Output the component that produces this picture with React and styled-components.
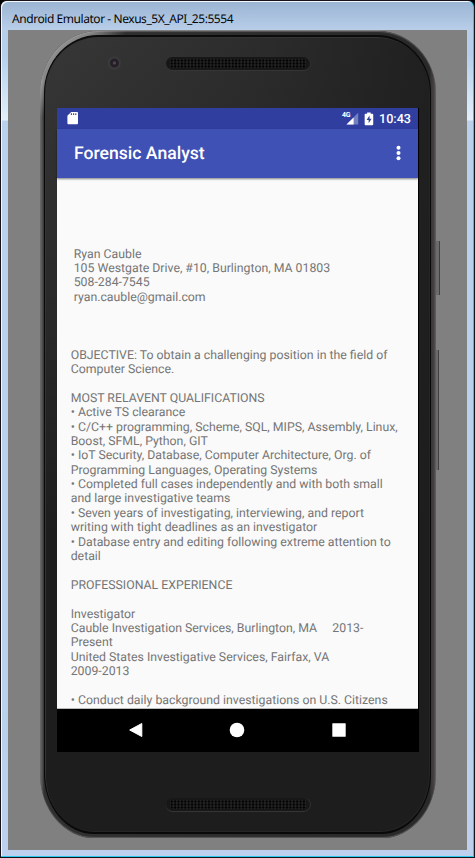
import React from 'react';
import styled, { createGlobalStyle } from 'styled-components';

const GlobalStyle = createGlobalStyle`
  * { box-sizing: border-box; }
  html, body { margin: 0; background: #000; overflow: hidden; }
`;

const Window = styled.div`
  width: 475px;
  height: 858px;
  display: flex;
  flex-direction: column;
  padding: 1px 1px 1px;
  border-radius: 7px 7px 0 0;
  background: #17131a;
  font-family: Roboto, sans-serif;
  text-rendering: geometricPrecision;
`;

const WindowFrame = styled.div`
  flex: 1;
  display: flex;
  flex-direction: column;
  padding: 1px 6px 6px 7px;
  border: 1px solid #28c8ea;
  border-width: 0 1px 1px 0;
  border-radius: 6px 6px 0 0;
  box-shadow: inset 1px 1px 0 #f4f8fc;
  background: linear-gradient(#9ab4d2 0, #b7cde8 28px, #b5d0ec 55px, #dcebf9 110px, #e3effa 119px, #b9d1ea 120px, #b9d1ea 700px, #bdd0ed 100%);
`;

const TitleBar = styled.header`
  height: 28px;
  padding: 8px 0 0 4px;
  font: 12px/18px 'Noto Sans', 'Open Sans', sans-serif;
  letter-spacing: -0.44px;
  white-space: nowrap;
  color: #050505;
`;

const Desktop = styled.main`
  width: 459px;
  height: 820px;
  padding: 1px 0 0 32px;
  background: #808080;
  overflow: hidden;
`;

const Phone = styled.div`
  position: relative;
  width: 396px;
  height: 807px;
  padding: 4px 5px 4px 4px;
  border-radius: 58px 58px 54px 54px / 62px 62px 64px 64px;
  background: linear-gradient(90deg, #6c6c6c 0, #555 2px, #303030 4px, #292929 390px, #393536 391px, #464243 394px, #666 396px);
  box-shadow: inset 0 1px 1px #5b5b5b, inset 0 -1px 1px #5a5a5a;

  &::before {
    content: '';
    position: absolute;
    inset: 0;
    border-radius: inherit;
    background: linear-gradient(135deg, rgba(205, 205, 205, 0.75) 0, rgba(200, 200, 200, 0.55) 38px, transparent 62px);
  }
`;

const Face = styled.div`
  position: relative;
  height: 100%;
  display: flex;
  flex-direction: column;
  padding: 0 12px 0 12px;
  border: 1px solid #090909;
  border-top: 2px solid #0b0b0b;
  border-bottom-width: 2px;
  border-radius: 54px 54px 50px 50px / 58px 58px 60px 60px;
  background: linear-gradient(180deg, transparent 0, #1d1d1e 500px),
    linear-gradient(90deg, #373738, #2c2c2c 55%, #202020);
  box-shadow: inset 1px 1px 0 #343434, inset -1px -1px 0 #252525;
`;

const SideButton = styled.i`
  position: absolute;
  left: 396px;
  top: ${(p) => p.$top}px;
  width: ${(p) => p.$width}px;
  height: ${(p) => p.$height}px;
  border-left: ${(p) => p.$width - 1}px solid #6b6b6b;
  background: #423f40;
`;

const Forehead = styled.div`
  height: 71px;
  display: grid;
  grid-template-columns: 109px 144px;
  align-items: start;
  flex: none;
`;

const Camera = styled.span`
  width: 14px;
  height: 14px;
  margin: 19px 0 0 50px;
  border-radius: 50%;
  background: radial-gradient(circle at 53% 50%, #5a424b 0 1px, #24202a 2px 4px, #3a3a3a 5px 6px, #343434 7px);
`;

const Speaker = styled.span`
  display: block;
  width: 144px;
  height: 13px;
  margin-top: ${(p) => p.$top}px;
  padding: 2px 4px;
  border-radius: 7px;
  background: #171717;
  box-shadow: 0 1px 0 #353535, 1px 0 0 #303030;

  &::after {
    content: '';
    display: block;
    height: 9px;
    background: radial-gradient(circle at 50% 50%, #020202 0 0.8px, #222 1.5px) 0 0 / 3.4px 3px;
  }
`;

const Chin = styled.div`
  display: flex;
  padding-left: 109px;
`;

const Screen = styled.section`
  width: 362px;
  height: 644px;
  flex: none;
  display: flex;
  flex-direction: column;
  padding-right: 1px;
  background: #000;
`;

const StatusBar = styled.div`
  height: 21px;
  display: flex;
  align-items: center;
  justify-content: space-between;
  padding: 0 7px 0 10px;
  background: #303f9f;
  color: #fff;
`;

const SdIcon = styled.svg`
  margin-bottom: 1px;
`;

const StatusIcons = styled.div`
  display: flex;
  align-items: center;
`;

const Clock = styled.time`
  width: 32px;
  margin-left: 5px;
  padding-top: 1px;
  font-size: 12.6px;
  font-weight: 500;
  line-height: 21px;
  white-space: nowrap;
`;

const AppBar = styled.div`
  position: relative;
  height: 49px;
  flex: none;
  display: flex;
  align-items: center;
  justify-content: space-between;
  padding: 0 17px 0 17px;
  background: #3f51b5;
  color: #fff;
  box-shadow: 0 1px 2px rgba(0, 0, 0, 0.5);
`;

const AppTitle = styled.h1`
  margin: 0;
  font-size: 17.6px;
  font-weight: 500;
  line-height: 24px;
`;

const MenuIcon = styled.svg`
  margin-bottom: 1px;
`;

const Content = styled.article`
  height: 531px;
  padding: 69.6px 0 0 13.7px;
  overflow: hidden;
  background: #fafafa;
  border-bottom: 1px solid #bbb;
  color: #757575;
  font-size: 12.3px;
  line-height: 14.39px;
`;

const Contact = styled.address`
  padding-left: 3px;
  margin-bottom: 43.4px;
  font-style: normal;
  white-space: pre;
`;

const Resume = styled.div`
  white-space: pre;
`;

const NavBar = styled.nav`
  height: 43px;
  flex: none;
  display: grid;
  grid-template-columns: repeat(3, 101.5px);
  justify-content: center;
  align-items: center;
  justify-items: center;
  padding: 0 1px 1px 0;
  background: #000;
`;

const contact = `Ryan Cauble
105 Westgate Drive, #10, Burlington, MA 01803
508-284-7545
ryan.cauble@gmail.com`;

const resume = `OBJECTIVE: To obtain a challenging position in the field of
Computer Science.

MOST RELAVENT QUALIFICATIONS
• Active TS clearance
• C/C++ programming, Scheme, SQL, MIPS, Assembly, Linux,
Boost, SFML, Python, GIT
• IoT Security, Database, Computer Architecture, Org. of
Programming Languages, Operating Systems
• Completed full cases independently and with both small
and large investigative teams
• Seven years of investigating, interviewing, and report
writing with tight deadlines as an investigator
• Database entry and editing following extreme attention to
detail

PROFESSIONAL EXPERIENCE

Investigator
Cauble Investigation Services, Burlington, MA     2013-
Present
United States Investigative Services, Fairfax, VA
2009-2013

• Conduct daily background investigations on U.S. Citizens`;

const SdCard = () => (
  <SdIcon width="12" height="14" viewBox="0 0 12 14">
    <path d="M4.2 1H10q1 0 1 1v10.2q0 1-1 1H1.4q-1 0-1-1V4.8z" fill="#fff" />
    <path d="M4.4 2.2v1.9M6.6 2.2v1.9M8.8 2.2v1.9" stroke="#303f9f" strokeWidth="1.1" />
  </SdIcon>
);

const NetworkLabel = styled.span`
  align-self: flex-start;
  width: 9px;
  margin: 3px -5px 0 0;
  font-size: 7px;
  font-weight: 700;
  line-height: 8px;
  letter-spacing: -0.3px;
`;

const Signal = () => (
  <svg width="13" height="13" viewBox="0 0 13 13">
    <path d="M12.2 .8v11.7H.5z" fill="#7580bf" />
    <path d="M7.6 5.4v7.1H.5z" fill="#fff" />
  </svg>
);

const BatteryIcon = styled.svg`
  margin-left: 5px;
`;

const Battery = () => (
  <BatteryIcon width="10" height="14" viewBox="0 0 9 14" preserveAspectRatio="none">
    <path d="M2.8 .5h3.2v1.2h1.5q.8 0 .8.8v9.8q0 .9-.8.9H1.4q-.8 0-.8-.9V2.5q0-.8.8-.8h1.4z" fill="#fff" />
    <path d="M5 3.6 2.3 8h1.9v3.2L6.8 6.7H5z" fill="#303f9f" />
  </BatteryIcon>
);

export default function App() {
  return (
    <>
      <GlobalStyle />
      <Window>
        <WindowFrame>
          <TitleBar>Android Emulator - Nexus_5X_API_25:5554</TitleBar>
          <Desktop>
            <Phone>
              <SideButton $top={210} $width={4} $height={54} />
              <SideButton $top={319} $width={3} $height={120} />
              <Face>
                <Forehead>
                  <Camera />
                  <Speaker $top={20} />
                </Forehead>
                <Screen>
                  <StatusBar>
                    <SdCard />
                    <StatusIcons>
                      <NetworkLabel>4G</NetworkLabel>
                      <Signal />
                      <Battery />
                      <Clock>10:43</Clock>
                    </StatusIcons>
                  </StatusBar>
                  <AppBar>
                    <AppTitle>Forensic Analyst</AppTitle>
                    <MenuIcon width="5" height="16" viewBox="0 0 5 16" fill="#fff">
                      <circle cx="2.5" cy="2.7" r="2" />
                      <circle cx="2.5" cy="8" r="2" />
                      <circle cx="2.5" cy="13.3" r="2" />
                    </MenuIcon>
                  </AppBar>
                  <Content>
                    <Contact>{contact}</Contact>
                    <Resume>{resume}</Resume>
                  </Content>
                  <NavBar>
                    <svg width="16" height="16" viewBox="0 0 16 16">
                      <path d="M13.8 1.5v13L1.7 8z" fill="#fff" stroke="#fff" strokeWidth="1" strokeLinejoin="round" />
                    </svg>
                    <svg width="16" height="16" viewBox="0 0 16 16">
                      <circle cx="8" cy="8" r="7.3" fill="#fff" />
                    </svg>
                    <svg width="16" height="16" viewBox="0 0 16 16">
                      <rect x="1.3" y="1.3" width="13.4" height="13.4" rx=".5" fill="#fff" />
                    </svg>
                  </NavBar>
                </Screen>
                <Chin>
                  <Speaker $top={46} />
                </Chin>
              </Face>
            </Phone>
          </Desktop>
        </WindowFrame>
      </Window>
    </>
  );
}
